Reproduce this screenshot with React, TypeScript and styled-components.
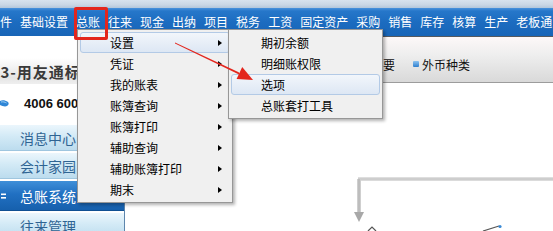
import React from "react";
import styled, { createGlobalStyle } from "styled-components";

const GlobalStyle = createGlobalStyle`
  * { box-sizing: border-box; }
  html, body { margin: 0; padding: 0; background: #ffffff; }
  body {
    width: 553px;
    height: 231px;
    overflow: hidden;
    font-family: "Noto Sans CJK SC", "Noto Sans", sans-serif;
  }
  #root { width: 553px; height: 231px; }
`;

const Screen = styled.div`
  position: relative;
  width: 553px;
  height: 231px;
  overflow: hidden;
  display: flex;
  flex-direction: column;
  background: #ffffff;
`;

const TitleStrip = styled.div`
  flex: none;
  height: 8px;
  background: linear-gradient(#d8e3ee, #cad7e5 60%, #b2c6db);
`;

const MenuBar = styled.nav`
  flex: none;
  height: 28px;
  display: flex;
  align-items: center;
  gap: 8px;
  padding-bottom: 1px;
  background: linear-gradient(#4a92dc 0px, #2677ca 3px, #1c6cc0 50%, #1865b7 100%);
  color: #ffffff;
  font-size: 12px;
  line-height: 14px;
  white-space: nowrap;
  overflow: hidden;
`;

const MenuTitle = styled.span<{ $lead?: boolean }>`
  flex: none;
  margin-left: ${(p) => (p.$lead ? "-12px" : "0")};
`;

const Body = styled.div`
  flex: 1;
  min-height: 0;
  display: grid;
  grid-template-columns: 125px 1fr;
`;

const Sidebar = styled.aside`
  display: flex;
  flex-direction: column;
  border-right: 1px solid #5d86ad;
  background: #ffffff;
  overflow: hidden;
`;

const LogoPanel = styled.div`
  flex: none;
  height: 89px;
  display: flex;
  flex-direction: column;
  padding-top: 22px;
  overflow: hidden;
`;

const LogoBand = styled.div`
  height: 26px;
  display: flex;
  align-items: center;
  white-space: nowrap;
  background: linear-gradient(#ffffff, #e4e4e4 75%, #efefef);
`;

const LogoText = styled.span`
  margin-left: -10px;
  font-size: 15px;
  font-weight: 700;
  letter-spacing: 1px;
  color: #3a3a3a;
`;

const PhoneRow = styled.div`
  margin-top: 10px;
  height: 18px;
  display: flex;
  align-items: center;
  gap: 14px;
  white-space: nowrap;
`;

const PhoneNumber = styled.span`
  font-family: "Liberation Sans", Arial, sans-serif;
  font-weight: 700;
  font-size: 13px;
  color: #111111;
`;

const NavList = styled.div`
  display: flex;
  flex-direction: column;
  gap: 2px;
`;

const NavItem = styled.div<{ $active?: boolean }>`
  flex: none;
  height: ${(p) => (p.$active ? 30 : 26)}px;
  display: flex;
  align-items: center;
  padding-left: 1px;
  font-size: 14px;
  white-space: nowrap;
  color: ${(p) => (p.$active ? "#ffffff" : "#2f6493")};
  background: ${(p) =>
    p.$active
      ? "linear-gradient(#3f8fd8, #2170c2 45%, #1660ad)"
      : "linear-gradient(#ebf6fc, #d3eaf6 45%, #bcdcee)"};
  border-bottom: 1px solid ${(p) => (p.$active ? "#0f4f92" : "#9fc6df")};
`;

const NavMarker = styled.span`
  flex: none;
  width: 19px;
  display: flex;
  align-items: center;
`;

const Main = styled.main`
  display: flex;
  flex-direction: column;
  min-width: 0;
  border-top: 1px solid #56595e;
`;

const Toolbar = styled.div`
  flex: none;
  height: 46px;
  display: flex;
  align-items: center;
  gap: 18px;
  padding: 9px 0 0 63px;
  background: linear-gradient(#fdf8f8, #eeeeee 40%, #d9d9d9);
  border-bottom: 1px solid #9c9c9c;
  font-size: 12px;
  color: #111111;
  white-space: nowrap;
  overflow: hidden;
`;

const ToolItem = styled.div`
  flex: none;
  display: flex;
  align-items: center;
  gap: 3px;
`;

const ToolIcon = styled.span`
  width: 6px;
  height: 6px;
  border-radius: 1px;
  background: linear-gradient(#8cc2f0, #2f7fce);
`;

const Canvas = styled.div`
  position: relative;
  flex: 1;
  background: #ffffff;
`;

const FlowSvg = styled.svg`
  position: absolute;
  left: 0;
  top: 0;
`;

const DropMenu = styled.div<{ $left: number; $top: number; $width: number }>`
  position: absolute;
  left: ${(p) => p.$left}px;
  top: ${(p) => p.$top}px;
  width: ${(p) => p.$width}px;
  padding: 2px;
  background: #f0f0f0;
  border: 1px solid #979797;
  box-shadow: 2px 2px 3px rgba(0, 0, 0, 0.3);
  display: flex;
  flex-direction: column;
`;

const MenuRow = styled.div<{ $hl?: boolean }>`
  height: 21px;
  display: flex;
  align-items: center;
  justify-content: space-between;
  padding: 0 7px 0 29px;
  font-size: 12px;
  color: #000000;
  white-space: nowrap;
  border: 1px solid ${(p) => (p.$hl ? "#b3cae6" : "transparent")};
  border-radius: 3px;
  background: ${(p) => (p.$hl ? "linear-gradient(#f2f6fb, #dde7f4)" : "transparent")};
`;

const SubArrow = styled.span`
  width: 0;
  height: 0;
  border-left: 4px solid #000000;
  border-top: 3.5px solid transparent;
  border-bottom: 3.5px solid transparent;
`;

const RedBox = styled.div`
  position: absolute;
  left: 74px;
  top: 7px;
  width: 34px;
  height: 33px;
  border: 3px solid #e3261d;
  border-radius: 2px;
  pointer-events: none;
`;

const AnnotationSvg = styled.svg`
  position: absolute;
  left: 0;
  top: 0;
  pointer-events: none;
`;

const topMenus = ["文件", "基础设置", "总账", "往来", "现金", "出纳", "项目", "税务", "工资", "固定资产", "采购", "销售", "库存", "核算", "生产", "老板通"];

const ledgerMenu: { label: string; sub: boolean }[] = [
  { label: "设置", sub: true },
  { label: "凭证", sub: true },
  { label: "我的账表", sub: true },
  { label: "账簿查询", sub: true },
  { label: "账簿打印", sub: true },
  { label: "辅助查询", sub: true },
  { label: "辅助账簿打印", sub: true },
  { label: "期末", sub: true },
];

const settingsMenu = ["期初余额", "明细账权限", "选项", "总账套打工具"];

const navItems = [
  { label: "消息中心", active: false },
  { label: "会计家园", active: false },
  { label: "总账系统", active: true },
  { label: "往来管理", active: false },
];

const toolItems = ["凭证类别", "结算方式", "常用摘要", "外币种类"];

function PhoneIcon() {
  return (
    <svg width="10" height="10" viewBox="0 0 10 10">
      <path d="M0 3 C2 2 5 2 8 4 C9 5 9 7 7 8 C5 9 2 8 0 7 Z" fill="#2f86d6" />
      <path d="M1 4 C3 3.5 5 4 6.5 5" stroke="#9fd0f5" strokeWidth="1" fill="none" />
    </svg>
  );
}

function CollapseIcon() {
  return (
    <svg width="6" height="8" viewBox="0 0 6 8">
      <rect x="0" y="1.5" width="5" height="1.6" fill="#ffffff" />
      <rect x="0" y="5" width="5" height="1.6" fill="#ffffff" />
    </svg>
  );
}

export default function App() {
  return (
    <>
      <GlobalStyle />
      <Screen>
        <TitleStrip />
        <MenuBar>
          {topMenus.map((m, i) => (
            <MenuTitle key={m} $lead={i === 0}>
              {m}
            </MenuTitle>
          ))}
        </MenuBar>
        <Body>
          <Sidebar>
            <LogoPanel>
              <LogoBand>
                <LogoText>T3-用友通标准版</LogoText>
              </LogoBand>
              <PhoneRow>
                <PhoneIcon />
                <PhoneNumber>4006 600 588</PhoneNumber>
              </PhoneRow>
            </LogoPanel>
            <NavList>
              {navItems.map((n) => (
                <NavItem key={n.label} $active={n.active}>
                  <NavMarker>{n.active ? <CollapseIcon /> : null}</NavMarker>
                  {n.label}
                </NavItem>
              ))}
            </NavList>
          </Sidebar>
          <Main>
            <Toolbar>
              {toolItems.map((t) => (
                <ToolItem key={t}>
                  <ToolIcon />
                  {t}
                </ToolItem>
              ))}
            </Toolbar>
            <Canvas>
              <FlowSvg width="428" height="148" viewBox="0 0 428 148">
                <defs>
                  <linearGradient id="hline" x1="0" y1="0" x2="0" y2="1">
                    <stop offset="0" stopColor="#e6e6e6" />
                    <stop offset="0.5" stopColor="#c6c6c6" />
                    <stop offset="1" stopColor="#e2e2e2" />
                  </linearGradient>
                  <linearGradient id="vline" x1="0" y1="0" x2="1" y2="0">
                    <stop offset="0" stopColor="#d8d8d8" />
                    <stop offset="0.5" stopColor="#b4b4b4" />
                    <stop offset="1" stopColor="#d8d8d8" />
                  </linearGradient>
                </defs>
                <rect x="233" y="94" width="195" height="4" fill="url(#hline)" />
                <rect x="232" y="96" width="4" height="34" fill="url(#vline)" />
                <path d="M229 129 L239 129 L234 139 Z" fill="#a8a8a8" />
                <path d="M243 148 L247 144 L251 148" stroke="#555" strokeWidth="1.2" fill="none" />
                <path d="M358 148 L374 143" stroke="#555" strokeWidth="1.2" fill="none" />
                <circle cx="375" cy="143.5" r="1.6" fill="#3a8ad6" />
              </FlowSvg>
            </Canvas>
          </Main>
        </Body>

        <DropMenu $left={77} $top={29} $width={156}>
          {ledgerMenu.map((m, i) => (
            <MenuRow key={m.label} $hl={i === 0}>
              <span>{m.label}</span>
              {m.sub ? <SubArrow /> : null}
            </MenuRow>
          ))}
        </DropMenu>

        <DropMenu $left={228} $top={29} $width={155}>
          {settingsMenu.map((m) => (
            <MenuRow key={m} $hl={m === "选项"}>
              <span>{m}</span>
            </MenuRow>
          ))}
        </DropMenu>

        <RedBox />
        <AnnotationSvg width="553" height="231" viewBox="0 0 553 231">
          <polygon points="175,42.6 175,43.4 240.1,75.0 238.7,72.2" fill="#e3261d" />
          <polygon points="253,80 236.6,78.9 242.2,67.1" fill="#e3261d" />
        </AnnotationSvg>
      </Screen>
    </>
  );
}
